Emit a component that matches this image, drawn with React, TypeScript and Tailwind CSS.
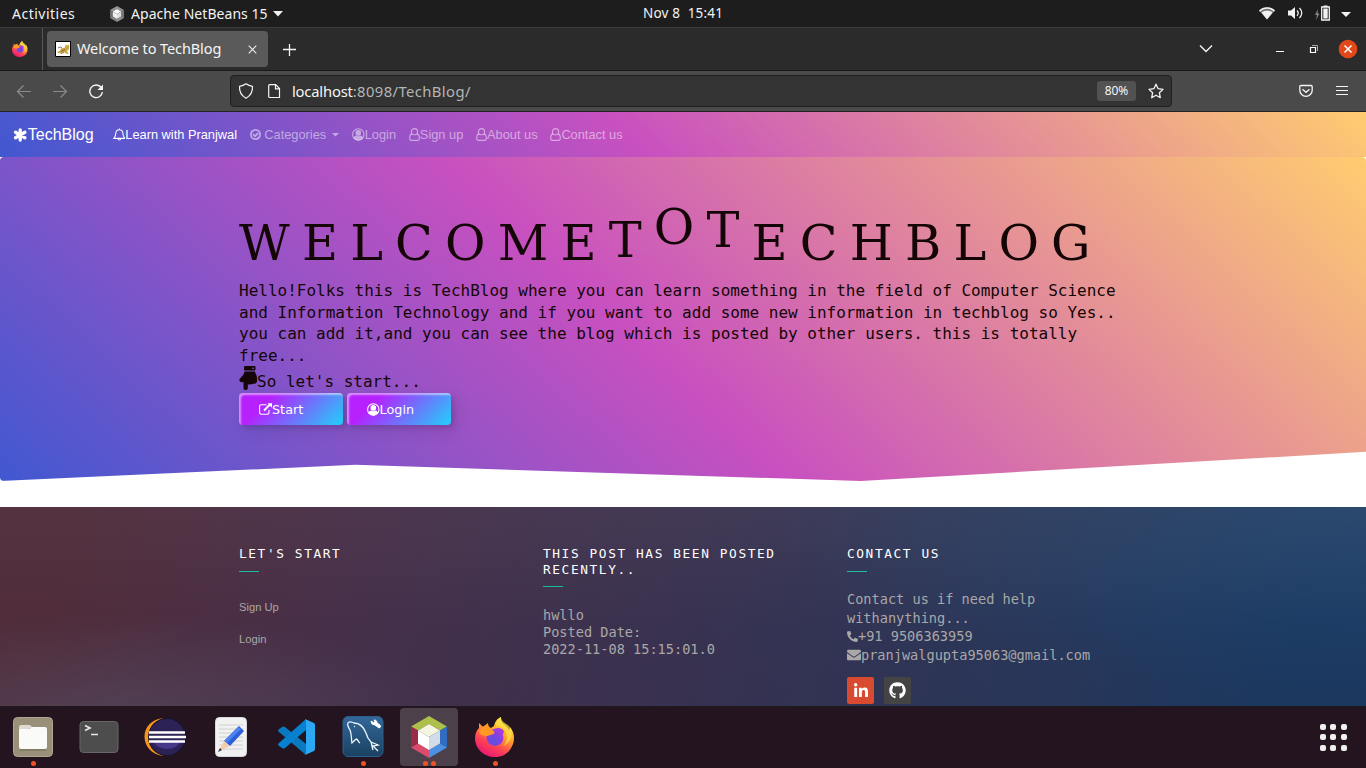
import type { ReactNode } from 'react';
import { FaEnvelope, FaGithub, FaLinkedinIn, FaPhoneAlt } from 'react-icons/fa';

const UI = "font-['Noto_Sans',sans-serif]";

function FirefoxLogo({ size, id }: { size: number; id: string }) {
  return (
    <svg width={size} height={size} viewBox="0 0 40 40" className="block shrink-0">
      <defs>
        <linearGradient id={id + 'a'} x1="0.8" y1="0" x2="0.25" y2="1">
          <stop offset="0.05" stopColor="#fff14a" />
          <stop offset="0.4" stopColor="#ffa12c" />
          <stop offset="0.7" stopColor="#ff4055" />
          <stop offset="1" stopColor="#e6127a" />
        </linearGradient>
        <radialGradient id={id + 'b'} cx="0.4" cy="0.7" r="0.8">
          <stop offset="0" stopColor="#5a52e0" />
          <stop offset="0.6" stopColor="#8a3fe0" />
          <stop offset="1" stopColor="#c03cdf" />
        </radialGradient>
      </defs>
      <path d="M19 9C20 4 23 1 26 0c-.5 4 1 6 4 8 2 1.500 3 3 4 6l1-4c4 5 5 11 3 17-3 8-9 13-18 13C9 40 0 32 0 21c0-5 2-8 4-10l0-5 4 4 5-4c0 3 1 4 3 5z" fill={`url(#${id}a)`} />
      <path d="M26 0c-3 2-5 5-5 9 4 0 8 2 10 6 2 5 1 10-3 14 9-4 11-13 6-20-3-3-8-4-8-9z" fill="#ffe044" opacity=".7" />
      <circle cx="20" cy="20.500" r="8.500" fill={`url(#${id}b)`} />
      <path d="M4 15l3-5 6-3c0 3 1 4.500 3 5l3 2.500c1 1.500 0 2.500-2 3l-5 1.500c-4 0-7-1-8-4z" fill="#ff9825" />
      <path d="M19 12c4-2 8-1 10 2l-1 4c-2-3-5-4-9-4z" fill="#a63de0" />
    </svg>
  );
}

function CubeLogo({ gray = false, w, h }: { gray?: boolean; w: number; h: number }) {
  const c = gray
    ? ['#929292', '#6e6e6e', '#777', '#858585', '#8d8d8d', '#fafafa', '#f0f0f0', '#ddd']
    : ['#adc14a', '#992b4b', '#326cc0', '#dc4a6c', '#4b91e3', '#f3f7df', '#fff', '#d2dce8'];
  return (
    <svg width={w} height={h} viewBox="0 0 36 42" preserveAspectRatio="none" className="block shrink-0">
      <path d="M18 0l18 10.500-7 4L18 8 7 14.500l-7-4z" fill={c[0]} />
      <path d="M0 10.500l7 4v13l-7 4z" fill={c[1]} />
      <path d="M36 10.500l-7 4v13l7 4z" fill={c[2]} />
      <path d="M0 31.500l7-4L18 34v8z" fill={c[3]} />
      <path d="M36 31.500l-7-4L18 34v8z" fill={c[4]} />
      <path d="M18 8l11 6.500L18 21 7 14.500z" fill={c[5]} />
      <path d="M7 14.500L18 21v13L7 27.500z" fill={c[6]} />
      <path d="M29 14.500L18 21v13l11-6.500z" fill={c[7]} />
    </svg>
  );
}

function TopBar() {
  return (
    <div className={`flex h-[27px] shrink-0 items-center bg-[#1d1d1d] text-[14px] leading-[27px] text-[#f2f2f2] ${UI}`}>
      <span className="ml-3 w-[98px] tracking-[0.5px]">Activities</span>
      <CubeLogo gray w={14} h={16} />
      <span className="ml-[7px] w-[137px] whitespace-nowrap tracking-[0.05px]">Apache NetBeans 15</span>
      <svg width="10" height="6" viewBox="0 0 10 6" className="ml-[5px]"><path d="M0 0h10L5 5.500z" fill="#f2f2f2" /></svg>
      <span className="ml-[360px] w-[80px] whitespace-pre text-[13.500px] tracking-[0.2px]">Nov 8  15:41</span>
      <svg width="100" height="20" viewBox="0 0 100 20" className="ml-[536px] w-[100px]">
        <path d="M0 6.500C4 2 12 2 16 6.500L8 15.500z" fill="#777" />
        <path d="M0 6.500C4 2 12 2 16 6.500l-1 1.200C11 3.700 5 3.700 1 7.700z" fill="#f2f2f2" />
        <path d="M2.500 8.500C5 6 11 6 13.500 8.500L8 15.500z" fill="#f2f2f2" />
        <path d="M29 6.500h3L36 3v12l-4-3.500h-3z" fill="#f2f2f2" />
        <path d="M38 6.500q2.500 2.500 0 5.300M40.500 4q4.500 4.800 0 10" fill="none" stroke="#f2f2f2" strokeWidth="1.200" />
        <path d="M59 5l-3 6h2l-1 5 3.500-6.500h-2z" fill="#888" />
        <path d="M62.700 3h7.600v13h-7.600z" fill="none" stroke="#f2f2f2" strokeWidth="1.300" />
        <path d="M64.500 1.500h4V3h-4zM64.300 4.600h4.400v9.900h-4.400z" fill="#f2f2f2" />
        <path d="M82 8h10l-5 5z" fill="#f2f2f2" />
      </svg>
    </div>
  );
}

function TomcatIcon() {
  return (
    <svg width="16" height="16" viewBox="0 0 16 16" className="shrink-0">
      <path d="M.5.500h15v15H.500z" fill="#fff" stroke="#000" />
      <path d="M2 11.500l3-2 1-2 4-1 .5-3 1.500 1 2-1v4.500l-2 2 1.500 3h-1.500l-3-2-2 .5-2 1z" fill="#cda63d" />
      <path d="M3 7q3-2 4 0M6 10.500l4-2M6 12.500l3-1" fill="none" stroke="#5a4f38" strokeWidth=".8" />
    </svg>
  );
}

function TabBar() {
  return (
    <div className={`flex h-11 shrink-0 border-b border-t border-b-[#1a1a1a] border-t-[#3b3b3b] bg-[#2b2b2b] text-[#f5f5f5] ${UI}`}>
      <div className="flex w-[43px] items-center border-r border-[#585858] pl-3">
        <FirefoxLogo size={16} id="fs" />
      </div>
      <div className="ml-1 mt-[3px] flex h-9 w-[221px] items-center rounded bg-[#5a5a5a] pl-2">
        <TomcatIcon />
        <span className="ml-[6px] w-[170.500px] text-[14.500px] tracking-[-0.1px]">Welcome to TechBlog</span>
        <svg width="9" height="9" viewBox="0 0 9 9"><path d="M.7.7l7.600 7.600M8.300.7L.7 8.300" stroke="#eee" strokeWidth="1.100" /></svg>
      </div>
      <svg width="14" height="14" viewBox="0 0 14 14" className="ml-[14px] mt-[15px]"><path d="M7.500 1v12M1 6.500h13" stroke="#f5f5f5" strokeWidth="1.300" /></svg>
      <svg width="160" height="42" viewBox="0 0 160 42" className="ml-auto mr-[8px]">
        <path d="M2 17.500l6 6 6-6" fill="none" stroke="#f5f5f5" strokeWidth="1.400" />
        <path d="M78 23.500h8" stroke="#fff" />
        <path d="M112.500 19.500h5v5h-5z" fill="none" stroke="#fff" strokeWidth="1.200" />
        <path d="M114 17.500h5.500v5.500" fill="none" stroke="#aaa" />
        <circle cx="150" cy="21" r="9.300" fill="#e2481a" />
        <path d="M146.500 17.500l7 7M153.500 17.500l-7 7" stroke="#fff" strokeWidth="1.500" />
      </svg>
    </div>
  );
}

function Toolbar() {
  return (
    <div className={`flex h-[41px] shrink-0 items-center border-b border-[#232323] bg-[#4a4a4a] ${UI}`}>
      <svg width="100" height="16" viewBox="0 0 100 16" className="ml-4 w-[100px]" fill="none">
        <path d="M15 8.500H1.500M7.500 2.500L1.500 8.500l6 6M37 8.500h13.500M44.500 2.500l6 6-6 6" stroke="#8c8c8c" strokeWidth="1.200" />
        <path d="M85.300 4.700A6.300 6.300 0 1 0 86.400 9" stroke="#f5f5f5" strokeWidth="1.400" />
        <path d="M87 1.500v5.500h-5.500z" fill="#f5f5f5" />
      </svg>
      <div className="ml-[114px] flex h-8 w-[942px] items-center rounded border border-[#1f1f1f] bg-[#333] text-[#f5f5f5]">
        <svg width="44" height="18" viewBox="0 0 44 18" className="ml-[7px]" fill="none" stroke="#f5f5f5" strokeWidth="1.200">
          <path d="M8 1.800C10 3.300 12 4 14.500 4.300 14.800 9.500 13 13.500 8 16.300 3 13.500 1.200 9.500 1.500 4.300 4 4 6 3.300 8 1.800z" strokeLinejoin="round" />
          <path d="M31.700 2.700h6l3.800 3.800v9h-9.800q-1 0-1-1V3.700q0-1 1-1zM37.500 3v3.800h4" />
        </svg>
        <span className="ml-[10px] text-[14.800px] tracking-[-0.2px]">localhost<span className="tracking-[0.4px] text-[#b5b5b5]">:8098/TechBlog/</span></span>
        <span className="ml-auto flex h-5 w-[39px] items-center justify-center rounded-[3px] bg-[#525252] text-[12px]">80%</span>
        <svg width="16" height="16" viewBox="0 0 16 16" className="ml-3 mr-[7px]"><path d="M8 1.200l2.100 4.500 4.900.7-3.600 3.400.9 4.900L8 12.300l-4.300 2.400.9-4.900L1 6.400l4.900-.7z" fill="none" stroke="#f5f5f5" strokeWidth="1.300" strokeLinejoin="round" /></svg>
      </div>
      <svg width="14" height="14" viewBox="0 0 14 14" className="ml-[127px]" fill="none" stroke="#f5f5f5" strokeWidth="1.300">
        <path d="M2 1.500h10q1.200 0 1.200 1.200v3.500a6.200 6.200 0 0 1-12.400 0V2.700Q.8 1.500 2 1.500zM3.500 5.300L7 8.300l3.500-3" />
      </svg>
      <svg width="12" height="12" viewBox="0 0 12 12" className="ml-[23px]"><path d="M0 1.500h12M0 5.500h12M0 9.500h12" stroke="#f5f5f5" strokeWidth="1.200" /></svg>
    </div>
  );
}

function UserOutline() {
  return (
    <svg width="11" height="13" viewBox="0 0 11 13" fill="none" stroke="currentColor" strokeWidth="1.100">
      <circle cx="5.500" cy="3.700" r="3.100" />
      <path d="M2.900 5.900C1.400 6.300.7 8.200.7 10.300c0 1.300.8 2.100 1.800 2.100h6c1 0 1.800-.8 1.800-2.100 0-2.100-.7-4-2.200-4.400" />
    </svg>
  );
}

function UserCircle() {
  return (
    <svg width="12.600" height="13" viewBox="0 0 12.600 13">
      <circle cx="6.300" cy="6.500" r="5.700" fill="none" stroke="currentColor" strokeWidth="1.100" />
      <circle cx="6.300" cy="4.900" r="2.800" fill="currentColor" />
      <path d="M1.600 10.100c.4-1.800 1.400-2.400 2.500-2.600 1.200 1 3.200 1 4.400 0 1.100.2 2.100.8 2.500 2.600-2.200 3.100-7.200 3.100-9.400 0z" fill="currentColor" />
    </svg>
  );
}

function NavItem({ icon, label, active }: { icon: ReactNode; label: string; active?: boolean }) {
  return (
    <span className={`flex items-center whitespace-nowrap ${active ? 'text-white' : 'text-white/50'}`}>
      {icon}
      <span>{label}</span>
    </span>
  );
}

function Nav() {
  return (
    <nav className="flex h-[45px] shrink-0 items-center gap-[12.800px] bg-[linear-gradient(43deg,#4158D0_0%,#C850C0_46%,#FFCC70_100%)] pl-[12.800px] font-['Liberation_Sans',Arial,sans-serif] text-[12.800px] text-white">
      <span className="mr-[6.200px] flex items-center text-[16px]">
        <svg width="15" height="14" viewBox="0 0 15 14" fill="none" stroke="currentColor" strokeWidth="3.300" strokeLinecap="round">
          <path d="M7.200 1.900v10.200M2.500 4.300l9.400 5.400M11.900 4.300L2.500 9.700" />
        </svg>
        <span>TechBlog</span>
      </span>
      <NavItem
        active
        label="Learn with Pranjwal"
        icon={
          <svg width="12.700" height="13" viewBox="0 0 13 13" fill="none" stroke="currentColor" strokeWidth="1.100">
            <path d="M6.500.300v1.200M.9 10.500C2.500 9 2.800 7.500 2.900 5 3.100 2.800 4.500 1.600 6.500 1.600s3.400 1.200 3.600 3.400c.1 2.500.4 4 2 5.500zM5 10.800c.2 1.800 2.800 1.800 3 0" />
          </svg>
        }
      />
      <span className="flex items-center text-white/50">
        <svg width="11" height="11" viewBox="0 0 11 11" fill="none">
          <path d="M.9 5.500a4.600 4.600 0 1 0 9.200 0 4.600 4.600 0 1 0-9.200 0zM3 5.200l2 2 3.200-3.200" stroke="currentColor" strokeWidth="1.800" />
        </svg>
        <span className="ml-[3.500px]">Categories</span>
        <svg width="7" height="4" viewBox="0 0 7 4" className="ml-[6.200px]"><path d="M0 0h7L3.500 3.500z" fill="currentColor" /></svg>
      </span>
      <NavItem label="Login" icon={<UserCircle />} />
      <NavItem label="Sign up" icon={<UserOutline />} />
      <NavItem label="About us" icon={<UserOutline />} />
      <NavItem label="Contact us" icon={<UserOutline />} />
    </nav>
  );
}

const LIFT: Record<number, string> = { 7: '-translate-y-[3px]', 8: '-translate-y-[16px]', 9: '-translate-y-[13px]' };

function ActionButton({ icon, label }: { icon: ReactNode; label: string }) {
  return (
    <button className="flex h-8 w-[104px] items-center rounded-[4px] bg-[linear-gradient(315deg,#1fd1f9_0%,#b621fe_74%)] pl-5 font-['DejaVu_Sans',sans-serif] text-[12.800px] text-white shadow-[inset_2px_2px_2px_0px_rgba(255,255,255,.5),6px_6px_16px_0px_rgba(0,0,0,.1),3px_3px_4px_0px_rgba(0,0,0,.1)]">
      {icon}
      <span>{label}</span>
    </button>
  );
}

function Hero() {
  return (
    <div className="h-[324px] shrink-0 rounded-[4px] bg-[linear-gradient(43deg,#4158D0_0%,#C850C0_46%,#FFCC70_100%)] pl-[239px] text-[#140606] [clip-path:polygon(0_0,100%_0,100%_91%,63%_100%,26%_95%,0_100%)]">
      <h1 className="flex h-[123px] items-end gap-[12.160px] pb-[8px] font-['DejaVu_Serif',serif] text-[49.400px] leading-[58px]">
        {'WELCOMETOTECHBLOG'.split('').map((c, i) => (
          <span key={i} className={LIFT[i] ?? ''}>{c}</span>
        ))}
      </h1>
      <div className="whitespace-nowrap font-['DejaVu_Sans_Mono',monospace] text-[16px] leading-[21.600px]">
        <p>Hello!Folks this is TechBlog where you can learn something in the field of Computer Science</p>
        <p>and Information Technology and if you want to add some new information in techblog so Yes..</p>
        <p>you can add it,and you can see the blog which is posted by other users. this is totally</p>
        <p>free...</p>
        <p className="flex h-[27px] items-end">
          <svg width="18" height="24" viewBox="0 0 18 24" className="mb-[3px]" fill="currentColor">
            <path d="M6 0h9.500q1 0 1 1v2.500q0 1-1 1H6q-1 0-1-1V1q0-1 1-1zm8 1.400a.8.800 0 1 0 0 1.700.8.800 0 0 0 0-1.700z" fillRule="evenodd" />
            <path d="M5.500 5.500h10.500c.2 2 2 3.500 2 6.500v3c0 2-1.500 3-3 2.600-1 .9-2.200.9-3 .4-.9.700-2.300.7-3.200.2V22c0 2.700-4.300 2.700-4.300 0v-6c-1.600 0-2.200 1-3.500-.4-1.500-2 0-3 1-4C4 9.500 5 8 5.500 5.500z" />
          </svg>
          <span className="pb-[1px]">So let's start...</span>
        </p>
      </div>
      <div className="flex gap-1">
        <ActionButton
          label="Start"
          icon={
            <svg width="13" height="12" viewBox="0 0 13 12" fill="none" stroke="currentColor">
              <path d="M7.500 1.800H2.300Q.6 1.800.6 3.500v6q0 1.700 1.700 1.700h6q1.700 0 1.700-1.700V7" strokeWidth="1.100" />
              <path d="M5 7.500l6-6" strokeWidth="1.900" />
              <path d="M8.500.200H13v4.500z" fill="currentColor" stroke="none" />
            </svg>
          }
        />
        <ActionButton label="Login" icon={<UserCircle />} />
      </div>
    </div>
  );
}

function FooterTitle({ children }: { children: ReactNode }) {
  return (
    <>
      <h6 className="text-[12.800px] uppercase leading-4 tracking-[1.600px] text-white">{children}</h6>
      <div className="h-[1px] w-5 bg-[#1abc9c]" />
    </>
  );
}

function Footer() {
  return (
    <footer className="min-h-0 flex-1 overflow-hidden bg-[radial-gradient(ellipse_350px_110px_at_8%_108%,rgba(85,78,100,0.6),transparent),radial-gradient(ellipse_500px_180px_at_52%_100%,rgba(48,36,66,0.2),transparent),linear-gradient(to_bottom,rgba(110,90,100,0.15),transparent_60%),radial-gradient(ellipse_600px_190px_at_100%_0%,rgba(35,80,125,0.6),transparent),linear-gradient(100deg,#502c3a_5%,#46304a_27%,#3a3452_50%,#2c3759_70%,#1b375e_94%)]">
      <div className="flex pl-[239px] pt-[39px] font-['DejaVu_Sans_Mono',monospace] text-[13.600px] text-[#a9a7a7]">
        <div className="w-[304px]">
          <div className="flex flex-col gap-[9px]"><FooterTitle>Let's start</FooterTitle></div>
          <div className="mt-[27px] font-['Liberation_Sans',Arial,sans-serif] text-[11.200px] leading-4">
            <p>Sign Up</p>
            <p className="mt-4">Login</p>
          </div>
        </div>
        <div className="w-[304px]">
          <div className="flex flex-col gap-2"><FooterTitle>This post has been posted<br />recently..</FooterTitle></div>
          <div className="mt-5 leading-[17px]">
            <p>hwllo</p>
            <p>Posted Date:</p>
            <p>2022-11-08 15:15:01.0</p>
          </div>
        </div>
        <div className="w-[304px]">
          <div className="flex flex-col gap-[9px]"><FooterTitle>Contact us</FooterTitle></div>
          <div className="mt-[18px] leading-[18.700px]">
            <p>Contact us if need help</p>
            <p>withanything...</p>
            <p className="flex items-center"><FaPhoneAlt size={11} /><span>+91 9506363959</span></p>
            <p className="flex items-center"><FaEnvelope size={14} /><span>pranjwalgupta95063@gmail.com</span></p>
          </div>
          <div className="mt-[12px] flex gap-[10px] text-white">
            <span className="flex h-[27px] w-[27px] items-center justify-center rounded-[2px] bg-[#d84b30] pt-px"><FaLinkedinIn size={16} /></span>
            <span className="flex h-[27px] w-[27px] items-center justify-center rounded-[2px] bg-[#444] pt-px"><FaGithub size={17} /></span>
          </div>
        </div>
      </div>
    </footer>
  );
}

function DockSlot({ children, dots = 0, active }: { children: ReactNode; dots?: number; active?: boolean }) {
  return (
    <div className="flex w-[66px] justify-center">
      <div className={`flex h-[58px] w-[58px] flex-col items-center rounded ${active ? 'bg-[#4c404a]' : ''}`}>
        <div className="flex h-[53px] shrink-0 items-center pt-[4px]">{children}</div>
        <div className="flex gap-[3px]">
          {Array.from({ length: dots }, (_, i) => <span key={i} className="h-[5px] w-[5px] rounded-full bg-[#ef5322]" />)}
        </div>
      </div>
    </div>
  );
}

function Dock() {
  return (
    <div className="flex h-[62px] shrink-0 border-t border-[#1c1a1c] bg-[#23141f] pt-[1px]">
      <DockSlot dots={1}>
        <svg width="40" height="40" viewBox="0 0 40 40">
          <rect x=".5" y=".5" width="39" height="39" rx="4" fill="#989079" stroke="#ada690" />
          <path d="M6 10q0-2 2-2h9l3 3h-4v5H6z" fill="#e0dad0" />
          <path d="M6 14q0-2 2-2h8l3-2h13q2 0 2 2v18q0 2-2 2H8q-2 0-2-2z" fill="#fafaf9" />
          <path d="M7 33h26" stroke="#7d775f" strokeWidth="1.500" />
        </svg>
      </DockSlot>
      <DockSlot>
        <svg width="40" height="40" viewBox="0 0 40 40">
          <rect x="1" y="4.500" width="38" height="31" rx="3.500" fill="#4d4d4d" stroke="#686868" />
          <path d="M6 8.500l5 2.500-5 2.500M12 17.500h7" fill="none" stroke="#e8e8e8" strokeWidth="1.600" />
        </svg>
      </DockSlot>
      <DockSlot>
        <svg width="42" height="40" viewBox="0 0 42 40">
          <path d="M20 1C-6 3-6 36 20 39 1 33 1 7 20 1z" fill="#f7941e" />
          <circle cx="23" cy="20" r="19" fill="#17122d" />
          <circle cx="23" cy="20" r="18" fill="#2c2255" />
          <path d="M10 25h26q-3 7-13 7t-13-7z" fill="#49388a" />
          <path d="M5 15.500h36M5 20h37M5 24.500h36" stroke="#fff" strokeWidth="2.300" />
        </svg>
      </DockSlot>
      <DockSlot>
        <svg width="34" height="40" viewBox="0 0 34 40">
          <rect x="1.500" y=".5" width="31" height="39" rx="4" fill="#f1f1f1" stroke="#d8d8d8" />
          <path d="M5 8h24M5 12h24M5 16h24M5 20h24M5 24h24M5 28h24M5 32h24" stroke="#d0d0d0" />
          <path d="M25 9l5 5-14 15-6-5z" fill="#2d60d8" />
          <path d="M24 10l3 2-14 14-3-2z" fill="#4c83ef" />
          <path d="M10 24l6 5-11 5z" fill="#f2cdac" /><path d="M6 31l2 2-4 2z" fill="#333" />
        </svg>
      </DockSlot>
      <DockSlot>
        <svg width="38" height="38" viewBox="0 0 38 38">
          <path d="M0 12l4-3q1-1 3 0l21 17v11L1 14q-1-1-1-2z" fill="#0b79c0" />
          <path d="M0 26q0 1 1 2l3 2q2 1 3 0l21-18V1L1 25z" fill="#0680cf" />
          <path d="M27 1l9 4q1 1 1 2v24q0 1-1 2l-9 4q1-1 1-3V4q0-2-1-3z" fill="#2aa8f4" />
        </svg>
      </DockSlot>
      <DockSlot dots={1}>
        <svg width="42" height="41" viewBox="0 0 42 41">
          <defs><linearGradient id="wb" x2="0" y2="1"><stop stopColor="#32689a" /><stop offset="1" stopColor="#1b4160" /></linearGradient></defs>
          <rect x="1" y=".5" width="40" height="40" rx="5" fill="url(#wb)" stroke="#2c608c" />
          <path d="M14 23l-4 4C9 22 10 19 8 14 6 11 5 9 6 7c1-2 4-1 6 0 6 0 10 5 12 10 1 4 3 7 5 9l7 3-5 1 5 5M14 23c2 0 2 3 4 4M29 26c1 3 1 5 2 8M12 10.500h1" fill="none" stroke="#eef5fa" strokeWidth="1.300" />
          <path d="M29 5l1 3 3 1 4 3 1.500-1-.5-2-3-2c0-2-1-3-3-3l1 2-1 1z" fill="#fff" stroke="#fff" />
        </svg>
      </DockSlot>
      <DockSlot dots={2} active><CubeLogo w={36} h={42} /></DockSlot>
      <DockSlot dots={1}><FirefoxLogo size={40} id="fl" /></DockSlot>
      <div className="ml-auto mr-[19.500px] mt-[15.500px] grid h-[27px] w-[27px] grid-cols-3 gap-[4.500px]">
        {Array.from({ length: 9 }, (_, i) => <span key={i} className="h-[6px] w-[6px] rounded-[2px] bg-[#f1efed]" />)}
      </div>
    </div>
  );
}

export default function App() {
  return (
    <div className="flex h-[768px] w-[1366px] flex-col overflow-hidden bg-white">
      <TopBar />
      <TabBar />
      <Toolbar />
      <Nav />
      <Hero />
      <div className="h-[26px] shrink-0 bg-white" />
      <Footer />
      <Dock />
    </div>
  );
}
